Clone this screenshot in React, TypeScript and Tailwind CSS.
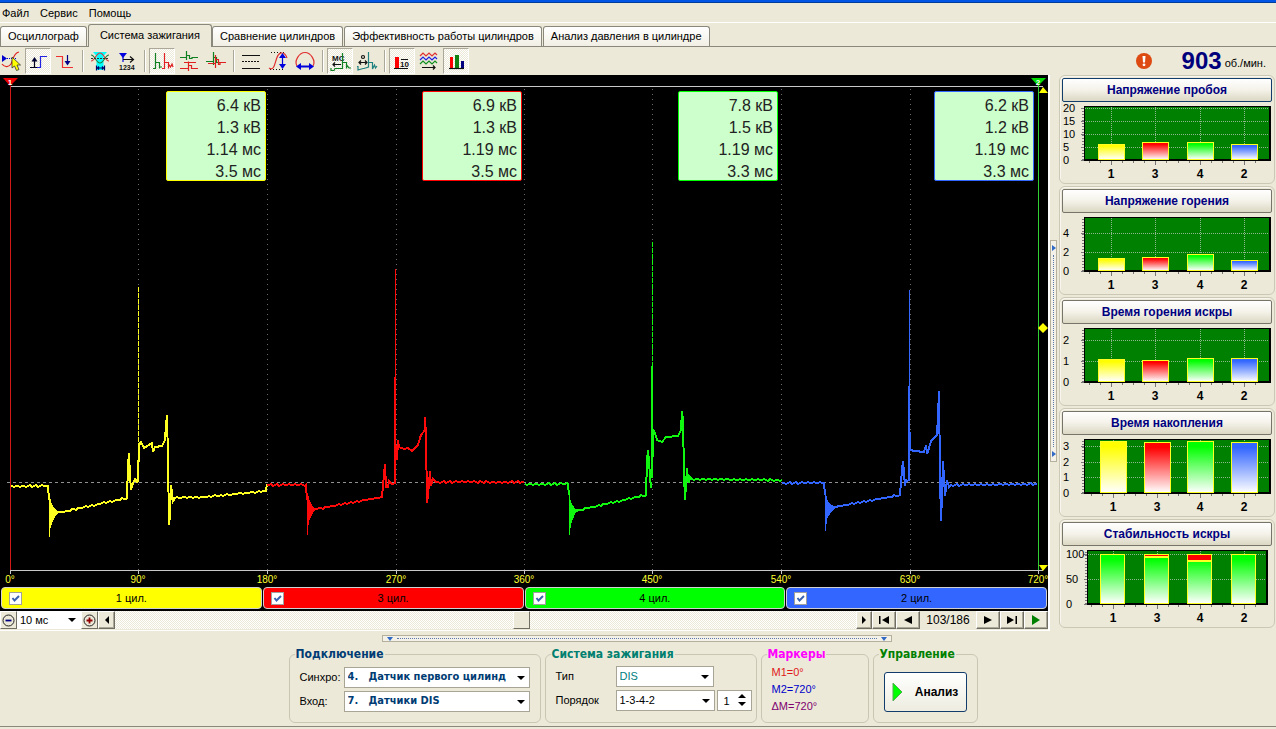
import React from 'react';

type Point = [number, number];

interface Channel {
  id: number;
  name: string;
  color: string;
  bg: string;
  border: string;
  readout: string[];
  start: Point[];
  ringX: number;
  ring: Point[];
  rise: Point[];
  spikeX: number;
  spikeTop: number;
  solidTop: number;
  spikeBase: number;
  dash?: string;
  burn: Point[];
}

const CHANNELS: Channel[] = [
  {
    id: 1, name: '1 цил.', color: '#ffff22', bg: 'bg-[#ffff00]', border: 'border-[#ffff00]',
    readout: ['6.4 кВ', '1.3 кВ', '1.14 мс', '3.5 мс'],
    start: [[10, 411], [48, 411], [49, 425]],
    ringX: 49, ring: [[419, 462], [424, 453], [428, 450], [430, 447], [432, 445], [433, 443], [434, 441], [435, 440], [436, 439]],
    rise: [[58, 437], [62, 437], [127, 423], [128, 390], [129, 378], [130, 400], [131, 415], [133, 408], [135, 404], [137, 407], [138, 407]],
    spikeX: 138, spikeTop: 212, solidTop: 385, spikeBase: 407, dash: '5 1',
    burn: [[139, 387], [139, 370], [141, 367], [144, 373], [147, 371], [152, 368], [153, 377], [155, 372], [162, 371], [165, 365], [166, 350], [167, 340], [168, 383], [169, 450], [170, 441], [171, 410], [173, 426], [175, 423], [205, 422], [266, 416], [267, 409]],
  },
  {
    id: 3, name: '3 цил.', color: '#ff0a0a', bg: 'bg-[#ff0000]', border: 'border-[#ff0000]',
    readout: ['6.9 кВ', '1.3 кВ', '1.19 мс', '3.5 мс'],
    start: [[267, 410], [306, 410], [307, 425]],
    ringX: 307, ring: [[418, 460], [421, 450], [425, 445], [427, 443], [429, 441], [431, 439], [432, 437], [433, 436]],
    rise: [[315, 434], [317, 434], [382, 422], [384, 400], [385, 389], [386, 412], [388, 412], [389, 406], [392, 409], [394, 409]],
    spikeX: 395, spikeTop: 194, solidTop: 302, spikeBase: 409,
    burn: [[396, 370], [397, 385], [398, 365], [399, 372], [404, 374], [408, 373], [412, 376], [418, 370], [421, 360], [425, 355], [425, 342], [426, 360], [427, 428], [428, 420], [430, 396], [431, 411], [433, 404], [436, 407], [524, 407]],
  },
  {
    id: 4, name: '4 цил.', color: '#10f810', bg: 'bg-[#00ff00]', border: 'border-[#00ff00]',
    readout: ['7.8 кВ', '1.5 кВ', '1.19 мс', '3.3 мс'],
    start: [[525, 409], [568, 409], [569, 420]],
    ringX: 569, ring: [[420, 460], [425, 453], [428, 448], [430, 445], [431, 443], [433, 440], [434, 438], [434, 437]],
    rise: [[576, 436], [579, 435], [646, 420], [647, 385], [648, 375], [650, 400], [651, 413]],
    spikeX: 652, spikeTop: 167, solidTop: 291, spikeBase: 403, dash: '5 1',
    burn: [[653, 382], [653, 355], [655, 358], [657, 365], [662, 367], [666, 362], [678, 361], [681, 355], [682, 336], [683, 345], [684, 398], [685, 425], [686, 410], [687, 393], [688, 405], [689, 408], [690, 402], [692, 404], [782, 405]],
  },
  {
    id: 2, name: '2 цил.', color: '#3366ff', bg: 'bg-[#3366ff]', border: 'border-[#3366ff]',
    readout: ['6.2 кВ', '1.2 кВ', '1.19 мс', '3.3 мс'],
    start: [[782, 408], [824, 408], [825, 420]],
    ringX: 825, ring: [[416, 456], [421, 449], [425, 443], [427, 441], [428, 440], [429, 438], [430, 437], [430, 436], [431, 435], [431, 434]],
    rise: [[835, 432], [840, 431], [900, 420], [902, 395], [903, 386], [905, 411], [906, 405], [908, 406]],
    spikeX: 909, spikeTop: 215, solidTop: 311, spikeBase: 406,
    burn: [[910, 357], [910, 375], [915, 376], [924, 377], [926, 370], [927, 379], [929, 373], [931, 366], [937, 360], [938, 340], [939, 316], [940, 400], [941, 446], [942, 420], [943, 386], [945, 421], [947, 405], [949, 412], [951, 410], [1037, 409]],
  },
];

const DEGREES: [number, string][] = [
  [10, '0°'], [138, '90°'], [267, '180°'], [396, '270°'], [524, '360°'],
  [652, '450°'], [781, '540°'], [910, '630°'], [1038, '720°'],
];

// long flat runs get a one pixel ripple, like sampled data
function trace(points: Point[]): string {
  const out: Point[] = [];
  points.forEach((p, i) => {
    const prev = points[i - 1];
    if (prev && p[0] - prev[0] > 12) {
      for (let x = prev[0] + 2; x < p[0]; x += 2) {
        const y = prev[1] + ((p[1] - prev[1]) * (x - prev[0])) / (p[0] - prev[0]);
        out.push([x, Math.round(y + Math.sin(x * 7.3) * 0.7)]);
      }
    }
    out.push(p);
  });
  return out.map(p => p.join(',')).join(' ');
}

const Scope: React.FC = () => (
  <svg className="block w-full h-auto" viewBox="0 0 1048 512" fontFamily="Liberation Sans, sans-serif">
    <g shapeRendering="crispEdges">
      <path d="M10 11.5H1043M10 495.5H1043" stroke="#c8c8c8" />
      {DEGREES.map(([x]) => (
        <path key={x} d={`M${x + 0.5} 495V499`} stroke="#c8c8c8" />
      ))}
      {DEGREES.slice(1, 8).map(([x]) => (
        <path key={x} d={`M${x + 0.5} 14V495`} stroke="#6a6a6a" strokeDasharray="1 4" />
      ))}
      <path d="M7 407.5H1038" stroke="#909090" strokeDasharray="3 3" />
      {CHANNELS.map(c => (
        <g key={c.id} fill="none" stroke={c.color}>
          <polyline points={trace(c.start)} strokeWidth={2} />
          {c.ring.map(([a, b], i) => (
            <path key={i} d={`M${c.ringX + i + 0.5} ${a}V${b}`} />
          ))}
          <polyline points={trace(c.rise)} strokeWidth={2} />
          <path d={`M${c.spikeX + 0.5} ${c.spikeTop}V${c.solidTop}`} strokeDasharray={c.dash} />
          <path d={`M${c.spikeX} ${c.solidTop}V${c.spikeBase}`} strokeWidth={2} />
          <polyline points={trace(c.burn)} strokeWidth={2} />
        </g>
      ))}
      <path d="M10.5 11V495" stroke="#d01818" />
      <path d="M1038.5 5V495" stroke="#30d030" />
    </g>
    <path d="M3 3H18L10 11Z" fill="#e00" />
    <text x="10" y="10" fontSize="8" fontWeight="bold" fill="#fff" textAnchor="middle">1</text>
    <path d="M1031 3H1046L1038 11Z" fill="#0d0" />
    <text x="1038" y="10" fontSize="8" fontWeight="bold" fill="#fff" textAnchor="middle">2</text>
    <path d="M1039 18L1043 12L1048 18ZM1039 490H1048L1043 496ZM1038 253L1043 248L1048 253L1043 258Z" fill="#ff0" />
    {DEGREES.map(([x, label]) => (
      <text key={x} x={x} y="508" fontSize="10" fill="#ffff30" textAnchor="middle">{label}</text>
    ))}
  </svg>
);

const HUES: Record<string, string> = { y: '#ffff00', r: '#ff0000', g: '#00ff00', b: '#3366ff' };

interface BarChartProps {
  title: string;
  unit: number;
  labels: number[];
  values: number[];
  xs?: number[];
  loss?: number[];
  focused?: boolean;
}

const BarChart: React.FC<BarChartProps> = ({ title, unit, labels, values, xs = [36, 80, 125, 169], loss, focused }) => {
  const barWidth = loss ? 25 : 27;
  const left = loss ? 25 : 22;
  const right = loss ? 206 : 209;
  const keys = loss ? ['g', 'g', 'g', 'g'] : ['y', 'r', 'g', 'b'];
  const base = 56;
  return (
    <section className="border border-[#cbc8b6] rounded-md px-[2px] pt-[2px] pb-[3px] shadow-[inset_1px_1px_0_#f8f6ee]">
      <button
        className={`block w-full h-6 rounded-[2px] border text-xs font-bold text-[#000080] bg-linear-to-b from-white via-[#f4f2e9] to-[#dcd8c4] ${focused ? 'border-[#123c6c]' : 'border-[#77746a]'}`}
      >
        {title}
      </button>
      <svg className="block w-full h-auto mt-[2px] overflow-visible" viewBox="0 0 210 76" fontFamily="Liberation Sans, sans-serif">
        <defs>
          {Object.entries(HUES).map(([k, hue]) => (
            <linearGradient key={k} id={`bar-${k}`} x1="0" y1="0" x2="0" y2="1">
              <stop offset="0.1" stopColor={hue} />
              <stop offset="1" stopColor="#fff" />
            </linearGradient>
          ))}
        </defs>
        <g shapeRendering="crispEdges">
          <rect x={left} y="2" width={right - left} height="55" fill="#000" />
          <rect x={left + 1} y="3" width={right - left - 3} height="52" fill="#008000" />
          <path d={`M${left - 1} 4V56`} stroke="#777" strokeWidth="2" strokeDasharray="1 2" />
          {labels.map(v => (
            <g key={v}>
              <path d={`M${left - 3} ${Math.round(base - v * unit) + 0.5}H${left}`} stroke="#777" />
              {v > 0 && (
                <path d={`M${left + 1} ${Math.round(base - v * unit) + 0.5}H${right - 2}`} stroke="#8fb68f" strokeDasharray="1 1" />
              )}
            </g>
          ))}
          {xs.map(x => (
            <g key={x}>
              <path d={`M${x + 13.5} 3V55`} stroke="#8fb68f" strokeDasharray="1 1" />
              <path d={`M${x + 13.5} 57V61M${x + 2.5} 57V59M${x + 24.5} 57V59M${x - 8.5} 57V59`} stroke="#777" />
            </g>
          ))}
          {values.map((v, i) => {
            const h = Math.round(v * unit);
            const lost = loss ? Math.round(loss[i] * unit) : 0;
            return (
              <g key={i} stroke="#ffff22">
                <rect x={xs[i] + 0.5} y={base - h + 0.5} width={barWidth - 1} height={h - 1} fill={`url(#bar-${keys[i]})`} />
                {lost > 0 && (
                  <>
                    <rect x={xs[i] + 0.5} y={base - h + 0.5} width={barWidth - 1} height={lost} fill="#f00" />
                    <path d={`M${xs[i]} ${base - h + lost + 1.5}h${barWidth}`} />
                  </>
                )}
              </g>
            );
          })}
        </g>
        {labels.map(v => (
          <text key={v} x={loss ? 4 : 1} y={Math.round(base - v * unit) + 4} fontSize="11">{v}</text>
        ))}
        {['1', '3', '4', '2'].map((n, i) => (
          <text key={n} x={xs[i] + 13} y="74" fontSize="12" fontWeight="bold" textAnchor="middle">{n}</text>
        ))}
      </svg>
    </section>
  );
};

interface ToolProps {
  label: string;
  active?: boolean;
  children: React.ReactNode;
}

const Tool: React.FC<ToolProps> = ({ label, active, children }) => (
  <button
    aria-label={label}
    className={active
      ? 'size-[26px] border border-t-[#aca899] border-l-[#aca899] border-r-white border-b-white bg-[repeating-conic-gradient(#fff_0_25%,#ece9d8_0_50%)] bg-[length:2px_2px]'
      : 'size-[26px] border border-transparent'}
  >
    <svg className="-m-px size-[26px] overflow-visible" viewBox="0 0 26 26" fill="none" strokeWidth="1.2" fontFamily="Liberation Sans, sans-serif">
      {children}
    </svg>
  </button>
);

const Separator = () => (
  <div className="flex w-[7px] h-[22px] justify-center">
    <div className="w-[2px] border-l border-[#aca899] bg-white" />
  </div>
);

const Toolbar: React.FC = () => (
  <div className="flex items-center gap-px -ml-[2px]" role="toolbar">
    <Tool label="Курсор">
      <path d="M4 16c3 4 7 3 9 0s2-11 8-12" stroke="#e02020" />
      <path d="M4 7V14L9 10.5Z" fill="#00c" />
      <path d="M9 10.5H19" stroke="#00c" strokeDasharray="1 1" />
      <path d="M14 9V20L16.500 18L18.500 22.500L21 21.500L19 17H22.500Z" fill="#ff0" stroke="#333" strokeWidth="0.8" />
    </Tool>
    <Tool label="Передний фронт" active>
      <path d="M5 19.500H15.500V8.500H22" stroke="#2222e0" />
      <path d="M9.500 19V11M5 19.500H12" stroke="#002" />
      <path d="M6.500 13.500L9.500 9L12.500 13.500Z" fill="#003" />
    </Tool>
    <Tool label="Задний фронт">
      <path d="M4 8.500H10.500V19.500H21" stroke="#f03030" />
      <path d="M15.500 7V15" stroke="#008" />
      <path d="M12.500 13L15.500 17.500L18.500 13Z" fill="#008" />
    </Tool>
    <Separator />
    <Tool label="Окно">
      <path d="M6 4H20L16.500 8V22H9.500V8Z" fill="#00ffff" />
      <path d="M4 13c4 0 5-8 9-8s5 8 9 8" stroke="#d04040" />
      <path d="M4 7c4 0 5 8 9 8s5-8 9-8" stroke="#208040" />
      <path d="M4 10.500H22" stroke="#333" strokeDasharray="2 1" />
      <path d="M9.500 17.500V22.500M17.500 17.500V22.500M10 20H17M12 18.500L10.500 20L12 21.500M15 18.500L16.500 20L15 21.500" stroke="#006" />
    </Tool>
    <Tool label="Нумерация">
      <path d="M5 5H13L9 10Z" fill="#00d" />
      <path d="M9 9V14" stroke="#00d" />
      <path d="M9 11.500H19M16 8.500L19.500 11.500L16 14.500" stroke="#111" />
      <text x="5" y="22" fontSize="7" fontWeight="bold" fill="#111">1234</text>
    </Tool>
    <Separator />
    <Tool label="Последовательно" active>
      <path d="M4 20.500H6.500V5V14.500H10.500V20.500M10.500 17V19H13" stroke="#108020" />
      <path d="M13 20.500H15.500V5V14.500H19.500V20.500M19.500 16L21.500 19L23 16L24 19" stroke="#e02020" />
    </Tool>
    <Tool label="Друг под другом">
      <path d="M4 9.500H10.500V3V12V7.500H13.500V10.500H16V9.500H22" stroke="#108020" />
      <path d="M4 20.500H12.500V13.500V23V17.500H15.500V20.500H22M8 14.500H20" stroke="#e02020" />
    </Tool>
    <Tool label="Наложение">
      <path d="M3 13.500H10.500V4V17V9.500H13.500V14.500H22" stroke="#108020" />
      <path d="M5 15.500H12.500V7V20V11.500H15.500V16.500H17V14.500H23" stroke="#e02020" />
    </Tool>
    <Separator />
    <Tool label="Линии сетки">
      <path d="M4 7.500H22M4 20.500H22" stroke="#111" />
      <path d="M4 13.500H22" stroke="#111" strokeDasharray="2 1" />
    </Tool>
    <Tool label="Амплитуда">
      <path d="M6 4.500H20M5 21.500H20" stroke="#111" strokeDasharray="1 2" />
      <path d="M4 20C12 25 9 4 17 5c3 0 4 2 5 5" stroke="#e03030" />
      <path d="M17.500 8V18" stroke="#00d" />
      <path d="M14 10L17.500 5L21 10ZM14 16L17.500 21L21 16Z" fill="#00d" />
    </Tool>
    <Tool label="Период">
      <path d="M5 18C2 13 7 4.500 13 4.500S24 13 21 18" stroke="#e03030" />
      <path d="M8 18.500H18" stroke="#00d" strokeWidth="2" />
      <path d="M9 15L4 18.500L9 22ZM17 15L22 18.500L17 22Z" fill="#00d" />
    </Tool>
    <Separator />
    <Tool label="Время" active>
      <text x="5" y="13" fontSize="8" fontWeight="bold" fill="#111">МС</text>
      <path d="M6 16.500H14M8 14.500L6 16.500L8 18.500" stroke="#111" />
      <path d="M4 20V22.500H7L8 20.500H15.500V5V14.500H19.500V20.500M19.500 17L22 20H24" stroke="#108020" />
    </Tool>
    <Tool label="Градусы">
      <circle cx="9" cy="9" r="1.500" stroke="#111" />
      <path d="M5 14.500H13M7 12.500L5 14.500L7 16.500M11 12.500L13 14.500L11 16.500" stroke="#111" />
      <path d="M3 18.500H4V22L9 20.500H10L14.500 19V4V14.500H18.500V21L20.500 17L21.500 20L23 18" stroke="#208080" />
    </Tool>
    <Separator />
    <Tool label="Цифры" active>
      <path d="M6 9H10V20H6Z" fill="#f00" />
      <path d="M5 20.500H19M12 11.500H19" stroke="#111" />
      <text x="11" y="19" fontSize="8" fontWeight="bold" fill="#111">10</text>
    </Tool>
    <Tool label="Тренды">
      <path d="M4 8l3-3 3 3 3-3 3 3 3-3 2 2" stroke="#e03030" />
      <path d="M4 12l3-3 3 3 3-3 3 3 3-3 2 2" stroke="#2020e0" />
      <path d="M4 16l3-3 3 3 3-3 3 3 3-3 2 2" stroke="#109020" />
      <path d="M6 19.500H19M17 17.500L19 19.500L17 21.500" stroke="#111" />
    </Tool>
    <Tool label="Гистограммы" active>
      <path d="M7 9H10V20H7Z" fill="#f00" />
      <path d="M12 7H16V20H12Z" fill="#108010" />
      <path d="M18 13H21V20H18Z" fill="#000080" />
      <path d="M6 20.500H21" stroke="#111" />
    </Tool>
  </div>
);

const TABS = ['Осциллограф', 'Система зажигания', 'Сравнение цилиндров', 'Эффективность работы цилиндров', 'Анализ давления в цилиндре'];

interface DropDownProps {
  label: string;
  value: string;
  className: string;
}

const DropDown: React.FC<DropDownProps> = ({ label, value, className }) => (
  <div className="relative flex min-w-0 flex-1">
    <select aria-label={label} className={`w-full appearance-none bg-white pl-[3px] pr-4 rounded-none ${className}`}>
      <option>{value}</option>
    </select>
    <svg className="pointer-events-none absolute right-[5px] top-1/2 -mt-[2px] w-[8px] h-[4px]" viewBox="0 0 8 4">
      <path d="M0 0H8L4 4Z" />
    </svg>
  </div>
);

interface StepButtonProps {
  label: string;
  width: string;
  path: string;
  color?: string;
}

const StepButton: React.FC<StepButtonProps> = ({ label, width, path, color = '#000' }) => (
  <button
    aria-label={label}
    className={`${width} h-[18px] flex shrink-0 items-center justify-center border border-t-white border-l-white border-r-[#716f64] border-b-[#716f64] shadow-[inset_-1px_-1px_0_#aca899]`}
  >
    <svg className="w-[12px] h-[10px]" viewBox="0 0 12 10" fill={color}>
      <path d={path} />
    </svg>
  </button>
);

const ZoomButton: React.FC<{ label: string; sign: string; color: string }> = ({ label, sign, color }) => (
  <button
    aria-label={label}
    className="w-[17px] h-[18px] flex shrink-0 items-center justify-center border border-t-white border-l-white border-r-[#716f64] border-b-[#716f64]"
  >
    <svg className="size-[13px]" viewBox="0 0 13 13" fill="none">
      <circle cx="6.5" cy="6.500" r="5.500" stroke="#222" />
      <path d={sign} stroke={color} strokeWidth="1.800" />
    </svg>
  </button>
);

const fieldset = 'border border-[#c9c6b4] rounded-md h-[75px] px-[10px] pb-2';
const legend = 'px-px -ml-[5px] h-[12px] leading-[12px] text-xs font-bold font-[DejaVu_Sans_Condensed,sans-serif]';

const App: React.FC = () => (
  <div className="min-h-screen flex flex-col bg-[#ece9d8] text-black text-[11px] font-[Liberation_Sans,Arial,sans-serif]">
    <div className="h-[3px] bg-[#0055e5] border-b border-[#003c9c]" />
    <nav className="flex h-5 items-center gap-[11px] pt-px pl-[2px] border-b border-white">
      <a href="#file">Файл</a>
      <a href="#service">Сервис</a>
      <a href="#help">Помощь</a>
    </nav>
    <div className="flex h-6 items-end border-b border-[#8a887c]" role="tablist">
      {TABS.map((t, i) => (
        <button
          key={t}
          role="tab"
          aria-selected={i === 1}
          className={i === 1
            ? 'h-[23px] -mb-px px-[11px] pb-[2px] whitespace-nowrap border border-b-0 border-[#8a887c] rounded-t-[3px] bg-[#ece9d8]'
            : 'h-[20px] mr-px px-[7px] whitespace-nowrap border border-b-0 border-[#8a887c] rounded-t-[3px] bg-linear-to-b from-white to-[#f1efe4]'}
        >
          {t}
        </button>
      ))}
    </div>
    <div className="flex h-7 items-center justify-between">
      <Toolbar />
      <div className="flex items-center pr-[10px]">
        <svg className="size-4 mr-[30px]" viewBox="0 0 16 16">
          <circle cx="8" cy="8" r="8" fill="#dd4a12" />
          <path d="M6.500 3H9.500L9 9.500H7Z" fill="#fff" />
          <circle cx="8" cy="11.800" r="1.400" fill="#fff" />
        </svg>
        <span className="text-2xl leading-7 font-bold text-[#00007c]">903</span>
        <span className="ml-[3px] mt-1 text-[11px]">об./мин.</span>
      </div>
    </div>

    <main className="flex">
      <div className="flex-1 min-w-0">
        <div className="relative bg-black pb-[2px]">
          <Scope />
          <div className="absolute inset-x-0 top-4 grid grid-cols-4 pl-[10px] pr-[14px]">
            {CHANNELS.map(c => (
              <div key={c.id} className={`justify-self-end w-[100px] h-[90px] border rounded-[2px] bg-[#ccffcc] pt-[3px] pr-1 text-right text-base leading-[22px] text-[#222] ${c.border}`}>
                {c.readout.map((r, i) => <div key={i} className="h-[22px]">{r}</div>)}
              </div>
            ))}
          </div>
          <div className="flex gap-px px-px">
            {CHANNELS.map(c => (
              <label key={c.id} className={`relative flex flex-1 h-[22px] items-center justify-center rounded-[4px] border border-[#d0d0d0] text-[11px] ${c.bg}`}>
                <span className="absolute left-[7px] flex">
                  <input type="checkbox" defaultChecked className="size-[13px] appearance-none border border-[#a0a0a0] bg-white" />
                  <svg className="pointer-events-none absolute inset-0 size-[13px]" viewBox="0 0 13 13">
                    <path d="M3.500 6L5.500 8.500L10 4" fill="none" stroke="#3a62b0" strokeWidth="2" />
                  </svg>
                </span>
                {c.name}
              </label>
            ))}
          </div>
        </div>
        <div className="flex h-5 pb-px items-center border-b border-white">
          <ZoomButton label="Сжать" sign="M3.500 6.500H9.500" color="#000080" />
          <div className="flex w-[64px] h-[18px]">
            <DropDown label="Развёртка" value="10 мс" className="text-[11px]" />
          </div>
          <ZoomButton label="Растянуть" sign="M3.500 6.500H9.500M6.500 3.500V9.500" color="#900000" />
          <StepButton label="Влево" width="w-[17px]" path="M8 1V9L4 5Z" />
          <input
            type="range"
            aria-label="Прокрутка"
            defaultValue={55}
            className="min-w-0 flex-1 h-[18px] appearance-none bg-[repeating-conic-gradient(#fff_0_25%,#ece9d8_0_50%)] bg-[length:2px_2px] [&::-webkit-slider-thumb]:appearance-none [&::-webkit-slider-thumb]:w-[17px] [&::-webkit-slider-thumb]:h-[18px] [&::-webkit-slider-thumb]:bg-[#ece9d8] [&::-webkit-slider-thumb]:border [&::-webkit-slider-thumb]:border-t-white [&::-webkit-slider-thumb]:border-l-white [&::-webkit-slider-thumb]:border-r-[#716f64] [&::-webkit-slider-thumb]:border-b-[#716f64]"
          />
          <StepButton label="Вправо" width="w-[16px]" path="M4 1V9L8 5Z" />
          <StepButton label="В начало" width="w-[24px]" path="M1 1H2.500V9H1ZM11 1V9L4 5Z" />
          <StepButton label="Назад" width="w-[24px]" path="M10 1V9L2 5Z" />
          <span className="w-[56px] shrink-0 text-center text-xs">103/186</span>
          <StepButton label="Вперёд" width="w-[24px]" path="M2 1V9L10 5Z" />
          <StepButton label="В конец" width="w-[24px]" path="M1 1V9L8 5ZM9.500 1H11V9H9.500Z" />
          <StepButton label="Пуск" width="w-[24px]" path="M2 0V10L10 5Z" color="#008000" />
        </div>
      </div>

      <div className="flex w-[11px] items-center justify-start border-l-2 border-white">
        <div className="flex flex-col items-center w-[7px] h-[222px] mb-1 border border-[#b4b09c] bg-[#f3f1e8] py-1">
          <svg className="w-[4px] h-[6px]" viewBox="0 0 4 6"><path d="M0 0L4 3L0 6Z" fill="#316ac5" /></svg>
          <div className="flex-1 my-1 border-l border-dotted border-[#5a78b0]" />
          <svg className="w-[4px] h-[6px]" viewBox="0 0 4 6"><path d="M0 0L4 3L0 6Z" fill="#316ac5" /></svg>
        </div>
      </div>

      <aside className="flex flex-col gap-[2px] w-[217px] shrink-0 pr-px">
        <BarChart title="Напряжение пробоя" unit={2.6} labels={[20, 15, 10, 5, 0]} values={[6.2, 6.9, 7, 6.2]} focused />
        <BarChart title="Напряжение горения" unit={9.5} labels={[4, 2, 0]} values={[1.37, 1.47, 1.79, 1.16]} />
        <BarChart title="Время горения искры" unit={21} labels={[2, 1, 0]} values={[1.1, 1.05, 1.14, 1.14]} />
        <BarChart title="Время накопления" unit={15.6} labels={[3, 2, 1, 0]} values={[3.33, 3.3, 3.33, 3.3]} xs={[38, 82, 125, 169]} />
        <BarChart title="Стабильность искры" unit={0.5} labels={[100, 50, 0]} values={[100, 100, 100, 100]} xs={[38, 82, 125, 169]} loss={[0, 4, 12, 0]} />
      </aside>
    </main>

    <div className="flex justify-center pr-[2px] pt-1">
      <div className="flex items-center w-[510px] h-[7px] border border-[#b4b09c] bg-[#f3f1e8] px-1">
        <svg className="w-[6px] h-[4px]" viewBox="0 0 6 4"><path d="M0 0H6L3 4Z" fill="#316ac5" /></svg>
        <div className="flex-1 mx-1 border-t border-dotted border-[#5a78b0]" />
        <svg className="w-[6px] h-[4px]" viewBox="0 0 6 4"><path d="M0 0H6L3 4Z" fill="#316ac5" /></svg>
      </div>
    </div>

    <form className="flex justify-center gap-1 pt-[6px] pr-[10px]">
      <fieldset className={`${fieldset} w-[252px]`}>
        <legend className={`${legend} text-[#003c74]`}>Подключение</legend>
        <div className="flex flex-col gap-[3px] pt-[7px]">
          <div className="flex items-center h-[21px]">
            <span className="w-[44px]">Синхро:</span>
            <DropDown label="Синхро" value={'4.\u00a0\u00a0\u00a0Датчик первого цилинд'} className="h-[21px] border border-[#a8a596] text-[11px] font-bold text-[#003c74] font-[DejaVu_Sans_Condensed,sans-serif]" />
          </div>
          <div className="flex items-center h-[21px]">
            <span className="w-[44px]">Вход:</span>
            <DropDown label="Вход" value={'7.\u00a0\u00a0\u00a0Датчики DIS'} className="h-[21px] border border-[#a8a596] text-[11px] font-bold text-[#003c74] font-[DejaVu_Sans_Condensed,sans-serif]" />
          </div>
        </div>
      </fieldset>
      <fieldset className={`${fieldset} w-[212px] pr-1`}>
        <legend className={`${legend} text-[#008070]`}>Система зажигания</legend>
        <div className="flex flex-col gap-[3px] pt-[6px]">
          <div className="flex items-center h-[21px] pr-[38px]">
            <span className="w-[60px]">Тип</span>
            <DropDown label="Тип" value="DIS" className="h-[21px] border border-[#a8a596] text-[11px] text-[#008080]" />
          </div>
          <div className="flex items-center h-[21px]">
            <span className="w-[60px]">Порядок</span>
            <DropDown label="Порядок" value="1-3-4-2" className="h-[21px] border border-[#a8a596] text-[11px]" />
            <div className="relative ml-[2px] flex w-[35px]">
              <input aria-label="Номер" defaultValue="1" className="w-full h-[21px] border border-[#a8a596] bg-white pl-[6px] text-[11px]" />
              <svg className="pointer-events-none absolute right-[6px] top-[3px] w-[8px] h-[14px]" viewBox="0 0 8 14">
                <path d="M0 5H8L4 1ZM0 9H8L4 13Z" />
              </svg>
            </div>
          </div>
        </div>
      </fieldset>
      <fieldset className={`${fieldset} w-[108px]`}>
        <legend className={`${legend} text-[#ff00ff]`}>Маркеры</legend>
        <div className="pt-1 text-[11px] leading-[17px]">
          <div className="text-[#e01818]">М1=0°</div>
          <div className="text-[#0000c8]">М2=720°</div>
          <div className="text-[#800070]">ΔМ=720°</div>
        </div>
      </fieldset>
      <fieldset className={`${fieldset} w-[105px] px-2`}>
        <legend className={`${legend} text-[#008000]`}>Управление</legend>
        <button type="button" className="flex items-center justify-center gap-3 w-full h-[40px] mt-3 rounded-[3px] border border-[#123c6c] bg-linear-to-b from-white to-[#eeece0] text-xs font-bold">
          <svg className="w-[11px] h-[20px]" viewBox="0 0 11 20"><path d="M1 1V19L10 10Z" fill="#00ff00" stroke="#50b050" /></svg>
          Анализ
        </button>
      </fieldset>
    </form>
    <div className="mt-[3px] border-b border-[#8a887c]" />
  </div>
);

export default App;
